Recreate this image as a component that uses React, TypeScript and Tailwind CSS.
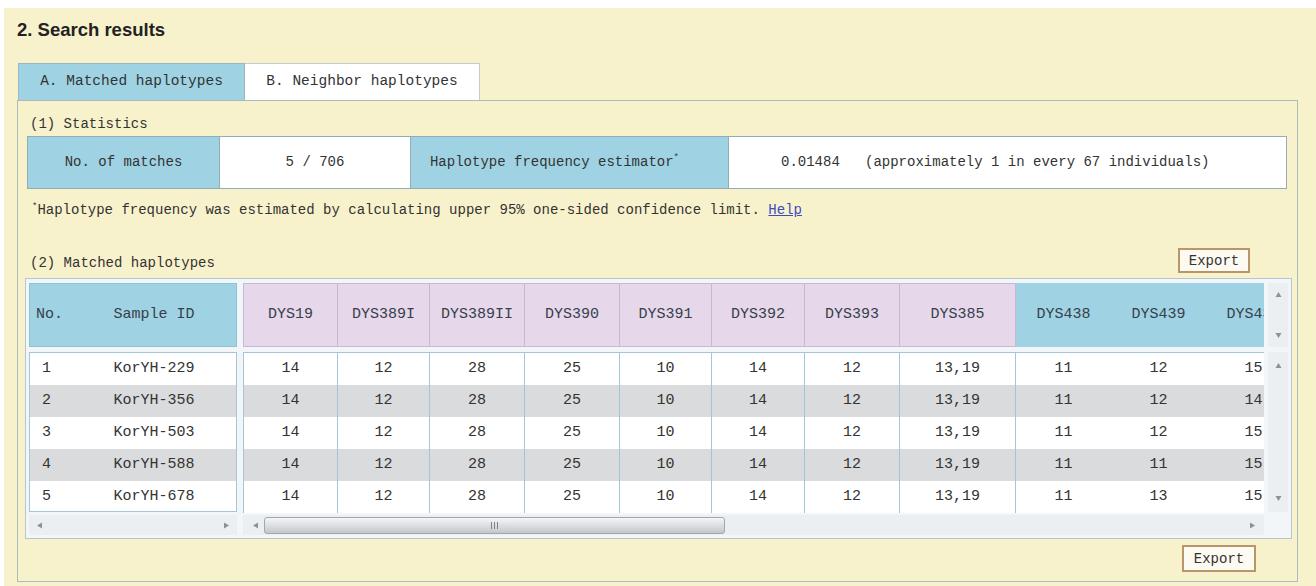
import React from "react";

type Col = { name: string; w: string; blue?: boolean; line?: boolean };

const cols: Col[] = [
  { name: "DYS19", w: "w-[95px]", line: true },
  { name: "DYS389I", w: "w-[92px]", line: true },
  { name: "DYS389II", w: "w-[95px]", line: true },
  { name: "DYS390", w: "w-[95px]", line: true },
  { name: "DYS391", w: "w-[92px]", line: true },
  { name: "DYS392", w: "w-[93px]", line: true },
  { name: "DYS393", w: "w-[95px]", line: true },
  { name: "DYS385", w: "w-[116px]", line: true },
  { name: "DYS438", w: "w-[95px]", blue: true },
  { name: "DYS439", w: "w-[95px]", blue: true },
  { name: "DYS437", w: "w-[95px]", blue: true },
];

const rows = [
  { no: "1", id: "KorYH-229", v: ["14", "12", "28", "25", "10", "14", "12", "13,19", "11", "12", "15"] },
  { no: "2", id: "KorYH-356", v: ["14", "12", "28", "25", "10", "14", "12", "13,19", "11", "12", "14"] },
  { no: "3", id: "KorYH-503", v: ["14", "12", "28", "25", "10", "14", "12", "13,19", "11", "12", "15"] },
  { no: "4", id: "KorYH-588", v: ["14", "12", "28", "25", "10", "14", "12", "13,19", "11", "11", "15"] },
  { no: "5", id: "KorYH-678", v: ["14", "12", "28", "25", "10", "14", "12", "13,19", "11", "13", "15"] },
];

function Tri({ dir }: { dir: "up" | "down" | "left" | "right" }) {
  const pts = {
    up: "3.5,1 6.5,6 0.5,6",
    down: "0.5,1 6.5,1 3.5,6",
    left: "6,0.5 6,6.5 1,3.5",
    right: "1,0.5 1,6.5 6,3.5",
  }[dir];
  return (
    <svg width="7" height="7" viewBox="0 0 7 7" className="block">
      <polygon points={pts} fill="#8d9297" />
    </svg>
  );
}

function ExportButton({ tall }: { tall?: boolean }) {
  return (
    <button
      className={`${tall ? "w-[74px] h-[27px]" : "w-[72px] h-[25px]"} border-2 border-[#b8956a] bg-[#fcfaf1] text-[14px] leading-none text-[#333] font-['Liberation_Mono','Courier_New',monospace]`}
    >
      Export
    </button>
  );
}

export default function App() {
  return (
    <div className="w-[1316px] h-[586px] bg-white pt-[8px] pl-[4px] overflow-hidden">
      <div className="h-[578px] bg-[#f8f2cc] pl-[13px] pr-[18px] font-['Liberation_Mono','Courier_New',monospace] text-[#333]">
        {/* page heading */}
        <div className="pt-[11px] h-[32px] text-[18.5px] leading-[21px] font-bold text-[#222] font-['Liberation_Sans',Arial,sans-serif]">
          2. Search results
        </div>

        {/* tabs */}
        <div className="mt-[23px] ml-[1px] flex h-[37px] text-[14.5px]">
          <div className="w-[227px] flex items-center justify-center bg-[#9fd3e4] border border-b-0 border-[#9bb8c2]">
            A. Matched haplotypes
          </div>
          <div className="w-[235px] flex items-center justify-center bg-white border border-l-0 border-b-0 border-[#c3ccce]">
            B. Neighbor haplotypes
          </div>
        </div>

        {/* tab panel */}
        <div className="h-[482px] border border-[#a9bcbc] flex flex-col text-[14px]">
          <div className="mt-[14px] ml-[12px] leading-[18px]">(1) Statistics</div>

          {/* statistics table */}
          <div className="mt-[3px] ml-[9px] mr-[10px] h-[53px] flex border border-[#93acb8]">
            <div className="w-[192px] flex items-center justify-center bg-[#9fd3e4] border-r border-[#93acb8]">
              No. of matches
            </div>
            <div className="w-[191px] flex items-center justify-center bg-white border-r border-[#93acb8]">
              5 / 706
            </div>
            <div className="w-[318px] flex items-center justify-center bg-[#9fd3e4] border-r border-[#93acb8] pr-[30px]">
              Haplotype frequency estimator<sup className="text-[9px] -top-[5px]">*</sup>
            </div>
            <div className="flex-1 flex items-center bg-white pl-[52px] whitespace-pre">
              0.01484   (approximately 1 in every 67 individuals)
            </div>
          </div>

          {/* footnote */}
          <div className="mt-[12px] ml-[14px] leading-[18px]">
            <sup className="text-[9px] -top-[5px]">*</sup>Haplotype frequency was estimated by calculating upper 95% one-sided confidence limit.{" "}
            <span className="text-[#3b4cc0] underline">Help</span>
          </div>

          {/* matched haplotypes header */}
          <div className="mt-[29px] ml-[12px] mr-[47px] h-[25px] flex items-end justify-between">
            <div className="leading-[18px] pb-[1px]">(2) Matched haplotypes</div>
            <ExportButton />
          </div>

          {/* haplotype grid */}
          <div className="mt-[5px] ml-[7px] mr-[5px] h-[261px] border border-[#b4c6d0] bg-[#f3f6f8] pt-[4px] pl-[3px] pr-[2px] text-[15px]">
            <div className="flex">
              {/* frozen id columns */}
              <div className="w-[208px] flex flex-col">
                <div className="h-[64px] flex items-center bg-[#9fd3e4] border border-[#8cc4d6] text-[#36404a]">
                  <div className="w-[54px] pl-[6px]">No.</div>
                  <div className="w-[140px] text-center">Sample ID</div>
                </div>
                <div className="h-[5px]" />
                <div className="h-[160px] border border-[#a3c6d8] overflow-hidden">
                  {rows.map((r, i) => (
                    <div key={r.no} className={`h-[32px] flex items-center ${i % 2 ? "bg-[#d9dbdd]" : "bg-white"}`}>
                      <div className="w-[54px] pl-[12px]">{r.no}</div>
                      <div className="w-[140px] text-center">{r.id}</div>
                    </div>
                  ))}
                </div>
                <div className="h-[3px]" />
                <div className="h-[20px] flex items-center justify-between px-[7px] bg-[#eceff2]">
                  <Tri dir="left" />
                  <Tri dir="right" />
                </div>
              </div>

              <div className="w-[6px]" />

              {/* scrolling marker columns */}
              <div className="w-[1021px] flex flex-col overflow-hidden">
                <div className="h-[64px] flex text-[#36404a]">
                  {cols.map((c, i) => (
                    <div
                      key={c.name}
                      className={`${c.w} shrink-0 flex items-center justify-center ${
                        c.blue ? "bg-[#9fd3e4]" : "bg-[#e6d7ea] border-r border-t border-b border-[#c7b9d4]"
                      } ${i === 0 ? "border-l" : ""}`}
                    >
                      {c.name}
                    </div>
                  ))}
                </div>
                <div className="h-[5px]" />
                <div className="h-[160px] border-t border-b border-[#a3c6d8]">
                  {rows.map((r, ri) => (
                    <div key={r.no} className={`h-[32px] flex ${ri % 2 ? "bg-[#d9dbdd]" : "bg-white"}`}>
                      {cols.map((c, ci) => (
                        <div
                          key={c.name}
                          className={`${c.w} shrink-0 flex items-center justify-center ${
                            c.line ? "border-r border-[#a3c6d8]" : ""
                          } ${ci === 0 ? "border-l" : ""}`}
                        >
                          {r.v[ci]}
                        </div>
                      ))}
                    </div>
                  ))}
                </div>
                <div className="h-[3px]" />
                <div className="h-[20px] flex items-center bg-[#eceff2] pl-[9px] pr-[8px]">
                  <Tri dir="left" />
                  <div className="ml-[5px] w-[461px] h-[17px] rounded-[3px] border border-[#a3a7ab] bg-gradient-to-b from-[#f4f5f6] via-[#dcdfe2] to-[#c3c7cb] flex items-center justify-center">
                    <div className="flex gap-[2px]">
                      <span className="w-[1px] h-[7px] bg-[#7d8186]" />
                      <span className="w-[1px] h-[7px] bg-[#7d8186]" />
                      <span className="w-[1px] h-[7px] bg-[#7d8186]" />
                    </div>
                  </div>
                  <div className="flex-1" />
                  <Tri dir="right" />
                </div>
              </div>

              {/* vertical scrollbars */}
              <div className="w-[25px] flex flex-col">
                <div className="h-[64px] ml-[4px] w-[20px] bg-[#eceff2] flex flex-col items-center justify-between py-[8px]">
                  <Tri dir="up" />
                  <Tri dir="down" />
                </div>
                <div className="h-[5px]" />
                <div className="h-[160px] ml-[4px] w-[20px] bg-[#eceff2] flex flex-col items-center justify-between py-[10px]">
                  <Tri dir="up" />
                  <Tri dir="down" />
                </div>
              </div>
            </div>
          </div>

          <div className="mt-[6px] mr-[41px] flex justify-end">
            <ExportButton tall />
          </div>
        </div>
      </div>
    </div>
  );
}
